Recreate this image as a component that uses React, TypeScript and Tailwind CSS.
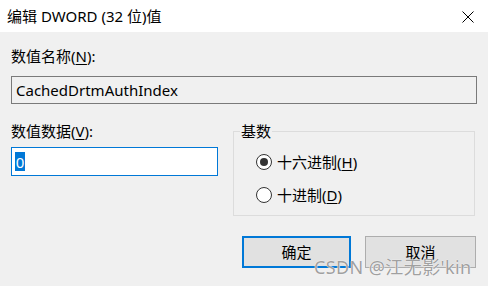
import React from 'react';

/**
 * Radio dot used in the 基数 group box
 */
function Radio({ checked }: { checked?: boolean }) {
  return (
    <span className="flex h-4 w-4 shrink-0 items-center justify-center rounded-full border border-[#333333] bg-white">
      {checked && <span className="h-2 w-2 rounded-full bg-[#333333]" />}
    </span>
  );
}

/**
 * Edit DWORD (32-bit) value dialog
 */
export default function App() {
  return (
    <div className="relative h-[286px] w-[488px] overflow-hidden bg-[#f0f0f0] font-['Noto_Sans','Noto_Sans_CJK_SC',sans-serif] text-[15px] leading-5 text-black">
      {/* Title bar */}
      <div className="flex h-8 items-center justify-between bg-white pl-[7px] pr-[14px]">
        <span>编辑 DWORD (32 位)值</span>
        <svg width="12" height="12" viewBox="0 0 12 12" className="mt-[1px]">
          <path d="M0.5 0.5 L11.5 11.5 M11.5 0.5 L0.5 11.5" stroke="#000" strokeWidth="1" />
        </svg>
      </div>

      {/* Body */}
      <div className="px-[11px] pt-[14px]">
        <div>
          数值名称(<u className="underline-offset-2">N</u>):
        </div>
        <div className="mt-[10px] flex h-7 w-[466px] items-center border border-[#7a7a7a] bg-[#f0f0f0] px-[4px]">
          CachedDrtmAuthIndex
        </div>

        <div className="mt-[17px] flex">
          <div className="w-[207px]">
            <div>
              数值数据(<u className="underline-offset-2">V</u>):
            </div>
            <div className="mt-[6px] flex h-[29px] items-center border border-[#0078d7] bg-white pl-[3px]">
              <span className="flex h-[19px] w-[10px] items-center justify-center bg-[#0078d7] text-white">0</span>
            </div>
          </div>

          <fieldset className="ml-[15px] mt-[2px] h-[93px] w-[242px] border border-[#dcdcdc] pl-[22px]">
            <legend className="ml-[-16px] px-[1px] leading-4">基数</legend>
            <div className="mt-[13px] flex items-center gap-[5px]">
              <Radio checked />
              <span>
                十六进制(<u className="underline-offset-2">H</u>)
              </span>
            </div>
            <div className="mt-[13px] flex items-center gap-[5px]">
              <Radio />
              <span>
                十进制(<u className="underline-offset-2">D</u>)
              </span>
            </div>
          </fieldset>
        </div>

        {/* Buttons */}
        <div className="mt-[20px] flex justify-end gap-[14px] pr-[1px]">
          <button className="h-8 w-[109px] border-2 border-[#0078d7] bg-[#e1e1e1]">确定</button>
          <button className="h-8 w-[111px] border border-[#adadad] bg-[#e1e1e1]">取消</button>
        </div>
      </div>

      {/* Watermark */}
      <span className="absolute left-[314px] top-[255px] text-[18px] leading-[24px] tracking-[0.4px] text-[#a0a0a0] [text-shadow:0_0_1px_#ffffff,0_0_1px_#ffffff]">
        CSDN @江无影'kin
      </span>
    </div>
  );
}
